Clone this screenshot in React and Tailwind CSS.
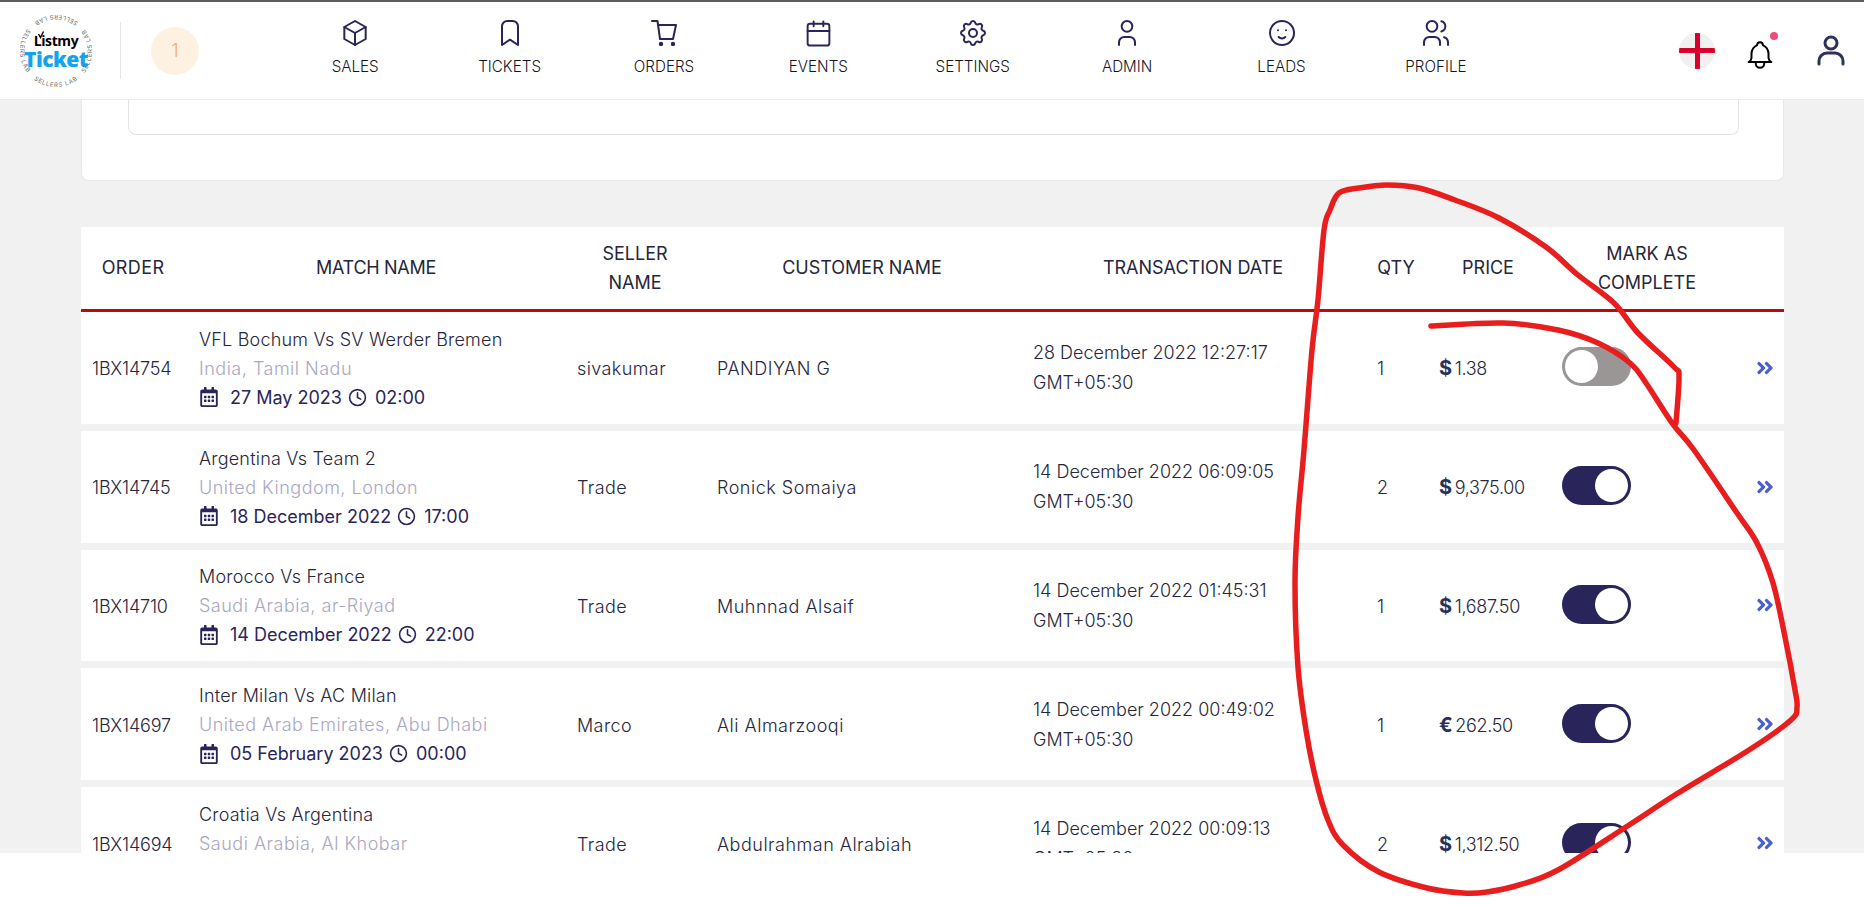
import React from 'react';
import { TbBox, TbBookmark, TbSettings, TbUser, TbMoodSmile, TbUsers, TbBell } from 'react-icons/tb';
import { FaRegCalendarAlt, FaAngleDoubleRight } from 'react-icons/fa';
import { FiClock } from 'react-icons/fi';
import { Calendar } from 'lucide-react';

const CartIcon = ({ className }) => (
  <svg viewBox="0 0 26 26" fill="none" stroke="currentColor" strokeWidth="2" strokeLinecap="round" strokeLinejoin="round" className={className}>
    <path d="M1 1h5.5l2.5 18h13l3-14H7" />
    <circle cx="10" cy="24" r="1.2" fill="currentColor" />
    <circle cx="22" cy="24" r="1.2" fill="currentColor" />
  </svg>
);

const navItems = [
  { label: 'SALES', icon: <TbBox size={32} strokeWidth={1.5} /> },
  { label: 'TICKETS', icon: <TbBookmark size={32} strokeWidth={1.5} /> },
  { label: 'ORDERS', icon: <CartIcon className="w-[26px] h-[26px] my-[3px]" /> },
  { label: 'EVENTS', icon: <Calendar size={29} strokeWidth={1.6} /> },
  { label: 'SETTINGS', icon: <TbSettings size={32} strokeWidth={1.5} /> },
  { label: 'ADMIN', icon: <TbUser size={32} strokeWidth={1.5} /> },
  { label: 'LEADS', icon: <TbMoodSmile size={32} strokeWidth={1.5} /> },
  { label: 'PROFILE', icon: <TbUsers size={32} strokeWidth={1.5} /> },
];

const orders = [
  { id: '1BX14754', match: 'VFL Bochum Vs SV Werder Bremen', place: 'India, Tamil Nadu', day: '27 May 2023', time: '02:00', seller: 'sivakumar', customer: 'PANDIYAN G', date: '28 December 2022 12:27:17', qty: 1, cur: '$', price: '1.38', done: false },
  { id: '1BX14745', match: 'Argentina Vs Team 2', place: 'United Kingdom, London', day: '18 December 2022', time: '17:00', seller: 'Trade', customer: 'Ronick Somaiya', date: '14 December 2022 06:09:05', qty: 2, cur: '$', price: '9,375.00', done: true },
  { id: '1BX14710', match: 'Morocco Vs France', place: 'Saudi Arabia, ar-Riyad', day: '14 December 2022', time: '22:00', seller: 'Trade', customer: 'Muhnnad Alsaif', date: '14 December 2022 01:45:31', qty: 1, cur: '$', price: '1,687.50', done: true },
  { id: '1BX14697', match: 'Inter Milan Vs AC Milan', place: 'United Arab Emirates, Abu Dhabi', day: '05 February 2023', time: '00:00', seller: 'Marco', customer: 'Ali Almarzooqi', date: '14 December 2022 00:49:02', qty: 1, cur: '€', price: '262.50', done: true },
  { id: '1BX14694', match: 'Croatia Vs Argentina', place: 'Saudi Arabia, Al Khobar', day: '13 December 2022', time: '22:00', seller: 'Trade', customer: 'Abdulrahman Alrabiah', date: '14 December 2022 00:09:13', qty: 2, cur: '$', price: '1,312.50', done: true },
];

// red pen scribble on top of the screenshot
const scribble = [
  [1431, 326], [1503, 323], [1558, 330], [1598, 343], [1630, 363], [1646, 383], [1672, 423], [1694, 450],
  [1737, 513], [1757, 543], [1773, 583], [1785, 637], [1795, 690], [1797, 707], [1791, 720], [1749, 750],
  [1678, 793], [1626, 827], [1558, 870], [1519, 885], [1487, 892], [1463, 893], [1427, 888], [1379, 872],
  [1343, 845], [1328, 820], [1316, 780], [1306, 730], [1298, 667], [1295, 583], [1298, 517], [1304, 450],
  [1312, 350], [1318, 300], [1324, 230], [1330, 210], [1339, 193], [1359, 188], [1387, 185], [1419, 188],
  [1455, 200], [1499, 218], [1546, 247], [1578, 275], [1614, 303], [1638, 333], [1674, 367], [1679, 377], [1676, 423],
];

// catmull-rom through the points so the pen line stays smooth
const smoothPath = (pts) => {
  let d = `M${pts[0][0]} ${pts[0][1]}`;
  for (let i = 0; i < pts.length - 1; i++) {
    const p0 = pts[i - 1] || pts[i];
    const p1 = pts[i];
    const p2 = pts[i + 1];
    const p3 = pts[i + 2] || p2;
    const c1x = p1[0] + (p2[0] - p0[0]) / 6;
    const c1y = p1[1] + (p2[1] - p0[1]) / 6;
    const c2x = p2[0] - (p3[0] - p1[0]) / 6;
    const c2y = p2[1] - (p3[1] - p1[1]) / 6;
    d += ` C${c1x} ${c1y} ${c2x} ${c2y} ${p2[0]} ${p2[1]}`;
  }
  return d;
};

const Logo = () => (
  <div className="relative w-[76px] h-[76px] shrink-0 flex flex-col items-center justify-center font-['Open_Sans',sans-serif]">
    <svg viewBox="0 0 76 76" className="absolute inset-0 w-full h-full">
      <defs>
        <path id="ring" d="M38 74a36 36 0 0 0 0-72a36 36 0 0 0 0 72" />
      </defs>
      <g transform="rotate(38 38 38)" fontSize="6" fill="#666" letterSpacing="0.8" fontFamily="Inter, sans-serif">
        {['0%', '25%', '50%', '75%'].map((offset) => (
          <text key={offset}>
            <textPath href="#ring" startOffset={offset}>SELLERS LAB</textPath>
          </text>
        ))}
      </g>
      <path d="M20.5 21l2 3.5l3-6" stroke="#000" strokeWidth="1.4" fill="none" />
    </svg>
    <span className="text-[14px] leading-[15px] font-bold text-black tracking-[-0.4px] mt-[3px]">Listmy</span>
    <span className="text-[21px] leading-[23px] font-extrabold text-[#12a4ee] tracking-[-0.5px]">Ticket</span>
  </div>
);

const Toggle = ({ on }) => (
  <div className={`w-[69px] h-[39px] rounded-full flex items-center px-[3px] -mt-[4px] ${on ? 'bg-[#29255b] justify-end' : 'bg-[#9a9696] justify-start'}`}>
    <div className="w-[33px] h-[33px] rounded-full bg-white" />
  </div>
);

const OrderRow = ({ o }) => (
  <div className="grid grid-cols-[118px_378px_140px_316px_344px_62px_123px_194px_28px] items-center h-[111.8px] shrink-0 pt-[2px] bg-white text-[18px] font-light text-[#26263c] leading-[29px] tracking-[0.2px]">
    <div className="pl-[11px] tracking-[-0.2px]">{o.id}</div>
    <div className="-mt-[1px]">
      <div>{o.match}</div>
      <div className="text-[#a9a7c4] tracking-[0.5px]">{o.place}</div>
      <div className="flex items-center text-[#29255b] font-normal tracking-[0px]">
        <FaRegCalendarAlt size={20} className="mr-[11px]" />
        <span>{o.day}</span>
        <FiClock size={19} className="mx-[6px]" />
        <span className="ml-[2px]">{o.time}</span>
      </div>
    </div>
    <div className="tracking-[0.4px]">{o.seller}</div>
    <div className="tracking-[0.5px]">{o.customer}</div>
    <div className="w-[280px] -mt-[1px] leading-[30px] tracking-[0px]">
      <div>{o.date}</div>
      <div>GMT+05:30</div>
    </div>
    <div>{o.qty}</div>
    <div className="flex items-center tracking-[-0.35px]">
      <span className="text-[20px] font-bold text-[#29305a] mr-[3px]">{o.cur}</span>
      <span>{o.price}</span>
    </div>
    <div><Toggle on={o.done} /></div>
    <div className="-mt-[2px] -ml-[1px]"><FaAngleDoubleRight size={20} className="text-[#4a5fd1]" /></div>
  </div>
);

export default function App() {
  return (
    <div className="relative h-[907px] w-[1864px] overflow-hidden bg-white font-['Inter',sans-serif]">
      <div className="h-[2px] bg-[#5d5d5f]" />

      {/* top nav */}
      <header className="flex items-center h-[98px] bg-white border-b border-[#ebebeb]">
        <div className="ml-[18px]"><Logo /></div>
        <div className="ml-[26px] w-px h-[57px] bg-[#e5e5e5]" />
        <div className="ml-[30px] w-[48px] h-[48px] rounded-full bg-[#fdf1e1] flex items-center justify-center text-[18px] font-light text-[#f5ad5c]">1</div>
        <nav className="ml-[79px] grid grid-cols-[repeat(8,154.4px)] self-start pt-[15px]">
          {navItems.map((item) => (
            <div key={item.label} className="flex flex-col items-center">
              <div className="h-8 flex items-center text-[#2a2559]">{item.icon}</div>
              <span className="mt-2 text-[15.2px] leading-5 font-light text-[#14141f]">{item.label}</span>
            </div>
          ))}
        </nav>
        <div className="ml-[166px] relative w-[36px] h-[36px] rounded-full bg-[#f0f0f0] overflow-hidden flex items-center justify-center">
          <div className="absolute w-[5px] h-full bg-[#d8002a]" />
          <div className="absolute h-[5px] w-full bg-[#d8002a]" />
        </div>
        <div className="ml-[28px] relative mt-[8px]">
          <TbBell size={34} strokeWidth={1.4} className="text-black" />
          <span className="absolute -top-[6px] right-[-1px] w-2 h-2 rounded-full bg-[#ee4d7c]" />
        </div>
        <svg viewBox="0 0 28 31" fill="none" stroke="#2b3453" strokeWidth="3" strokeLinecap="round" className="ml-[40px] w-[28px] h-[31px]">
          <circle cx="14" cy="8" r="6" />
          <path d="M2 29v-3a8 8 0 0 1 8-8h8a8 8 0 0 1 8 8v3" />
        </svg>
      </header>

      {/* scrolled page, cut off above the white strip */}
      <main className="h-[753px] overflow-hidden bg-[#f1f1f1] pl-[81px]">
        <div className="w-[1703px]">
          <div className="h-[81px] bg-white border border-t-0 border-[#e8e8e8] rounded-b-lg">
            <div className="h-[35px] ml-[46px] mr-[44px] border border-t-0 border-[#e3e3e3] rounded-b-lg" />
          </div>

          <div className="mt-[46px] grid grid-cols-[104px_382px_136px_318px_344px_62px_122px_196px_39px] items-center h-[85px] pb-[1px] bg-white border-b-[3px] border-[#b80c0c] text-[18px] text-[#26263a] text-center leading-[29px]">
            <div className="tracking-[0.4px]">ORDER</div>
            <div className="tracking-[-0.3px]">MATCH NAME</div>
            <div>SELLER<br />NAME</div>
            <div>CUSTOMER NAME</div>
            <div>TRANSACTION DATE</div>
            <div>QTY</div>
            <div>PRICE</div>
            <div>MARK AS<br />COMPLETE</div>
            <div />
          </div>

          <div className="flex flex-col gap-[7px]">
            {orders.map((o) => <OrderRow key={o.id} o={o} />)}
          </div>
        </div>
      </main>

      <svg viewBox="0 0 1864 907" fill="none" className="absolute inset-0 w-full h-full pointer-events-none">
        <path d={smoothPath(scribble)} stroke="#e81e1e" strokeWidth="5.5" strokeLinejoin="round" strokeLinecap="round" />
      </svg>
    </div>
  );
}
